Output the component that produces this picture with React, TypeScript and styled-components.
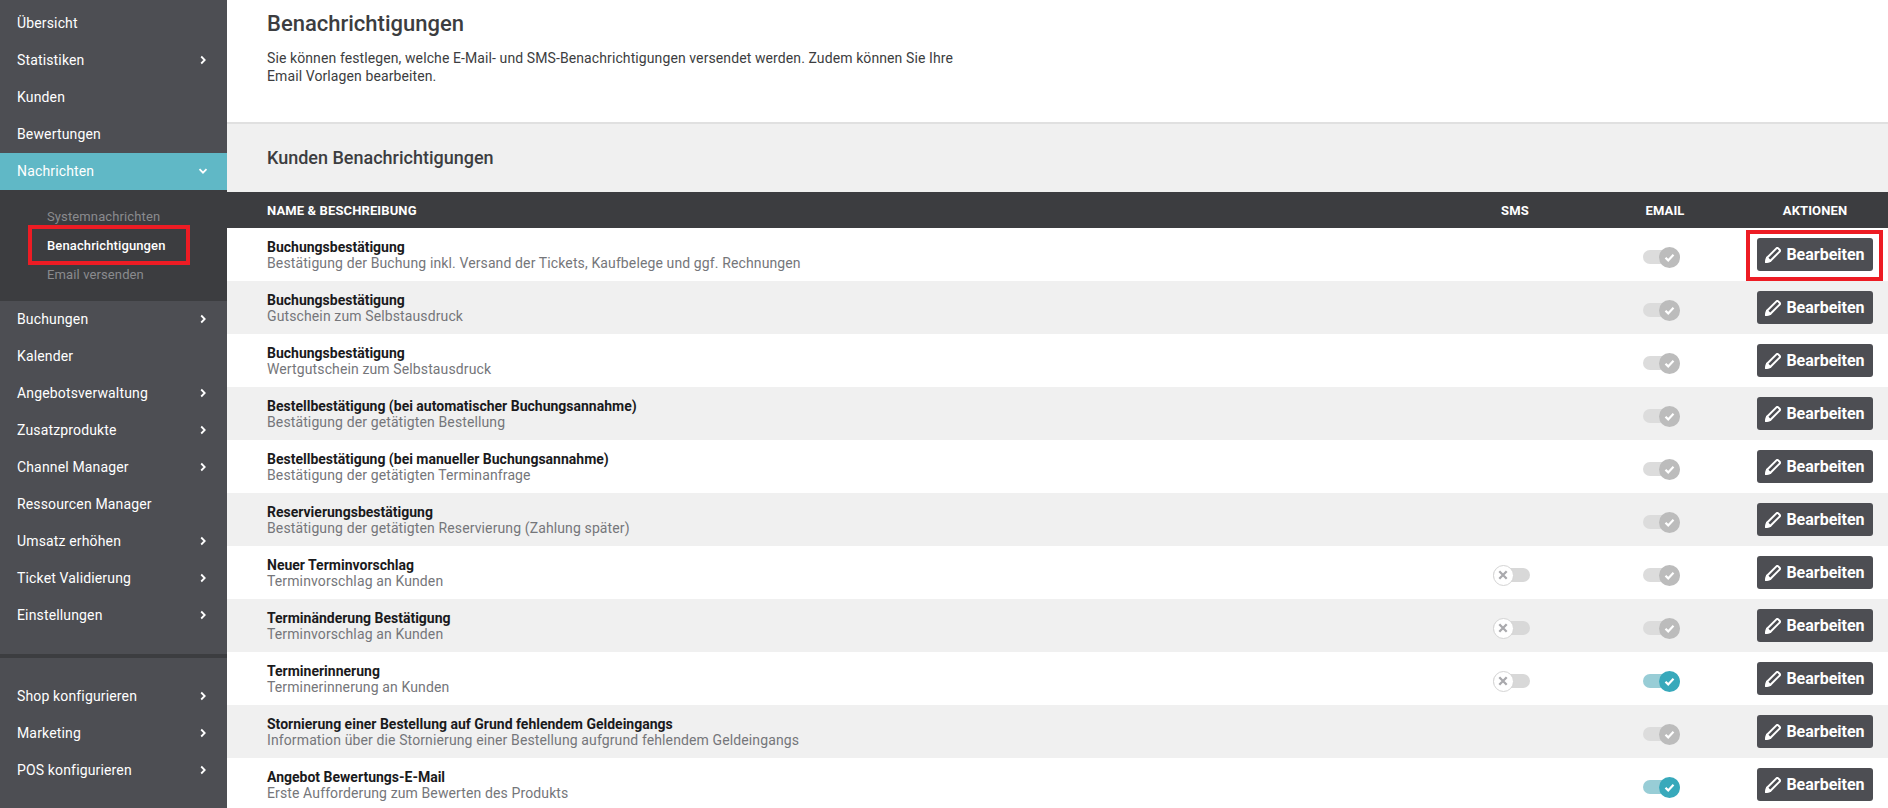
import React from "react";
import styled, { createGlobalStyle } from "styled-components";

const Global = createGlobalStyle`
  html, body { margin: 0; padding: 0; height: 100%; overflow: hidden; background: #fff; }
  #root { height: 100%; }
  * { box-sizing: border-box; }
`;

const Page = styled.div`
  display: flex;
  height: 808px;
  overflow: hidden;
  font-family: Roboto, "Liberation Sans", sans-serif;
`;

const Sidebar = styled.nav`
  position: relative;
  flex: 0 0 227px;
  background: #4d4e53;
  padding-top: 5px;
`;

const NavItem = styled.div<{ $active?: boolean }>`
  display: flex;
  align-items: center;
  justify-content: space-between;
  height: 37px;
  padding: 0 19px 2px 17px;
  font-size: 14px;
  letter-spacing: 0.15px;
  color: #fff;
  background: ${(p) => (p.$active ? "#60b8c6" : "transparent")};
`;

const SubMenu = styled.div`
  height: 111px;
  background: #3c3d40;
  padding: 12px 0 0 47px;
`;

const SubItem = styled.div<{ $active?: boolean }>`
  height: 29px;
  line-height: 29px;
  font-size: 13px;
  letter-spacing: 0.12px;
  font-weight: ${(p) => (p.$active ? 500 : 400)};
  color: ${(p) => (p.$active ? "#fff" : "#8a8b8e")};
`;

const SideDivider = styled.div`
  height: 4px;
  background: #3c3d40;
  margin: 20px 0 20px;
`;

const Highlight = styled.div`
  position: absolute;
  left: 28px;
  top: 225px;
  width: 162px;
  height: 40px;
  border: 4px solid #ed1c24;
`;

const Main = styled.main`
  position: relative;
  flex: 1;
  min-width: 0;
`;

const Intro = styled.header`
  height: 124px;
  padding: 10px 0 0 40px;
  background: #fff;
  border-bottom: 2px solid #e0e0e0;
`;

const Title = styled.h1`
  margin: 0 0 11px;
  font-size: 22px;
  line-height: 28px;
  font-weight: 500;
  color: #3c3d40;
`;

const Lead = styled.p`
  margin: 0;
  width: 720px;
  font-size: 14px;
  line-height: 18px;
  letter-spacing: 0.1px;
  color: #3c3d40;
`;

const SectionHead = styled.div`
  display: flex;
  align-items: center;
  height: 68px;
  padding: 0 0 2px 40px;
  background: #f0f0f0;
  font-size: 18px;
  font-weight: 500;
  color: #3c3d40;
`;

const Grid = `
  display: grid;
  grid-template-columns: 1fr 150px 150px 148px;
  align-items: center;
`;

const HeadRow = styled.div`
  ${Grid}
  height: 36px;
  padding-left: 40px;
  background: #3c3d40;
  color: #fff;
  font-size: 13px;
  letter-spacing: 0.12px;
  font-weight: 700;
`;

const HeadCell = styled.div<{ $center?: boolean }>`
  text-align: ${(p) => (p.$center ? "center" : "left")};
  &:last-child {
    padding-left: 2px;
  }
`;

const Row = styled.div<{ $alt: boolean }>`
  ${Grid}
  height: 53px;
  padding-left: 40px;
  background: ${(p) => (p.$alt ? "#f0f0f0" : "#fff")};
`;

const Name = styled.div`
  font-size: 14px;
  line-height: 16px;
  font-weight: 700;
  color: #1a1a1c;
`;

const Desc = styled.div`
  font-size: 14px;
  line-height: 16px;
  letter-spacing: 0.12px;
  color: #75767a;
`;

const Cell = styled.div`
  display: flex;
  justify-content: center;
  padding: 5px 8px 0 0;
`;

const Track = styled.div<{ $on: boolean; $teal?: boolean }>`
  position: relative;
  width: 37px;
  height: 14px;
  border-radius: 7px;
  background: ${(p) => (p.$teal ? "#98cdd6" : p.$on ? "#dcdcdc" : "#d8d8d8")};
`;

const Knob = styled.div<{ $on: boolean; $teal?: boolean }>`
  position: absolute;
  top: -3.5px;
  ${(p) => (p.$on ? "right: 0;" : "left: 0;")}
  width: 21px;
  height: 21px;
  border-radius: 50%;
  display: flex;
  align-items: center;
  justify-content: center;
  background: ${(p) => (p.$teal ? "#38a9bb" : p.$on ? "#bcbcbc" : "#fff")};
  border: ${(p) => (p.$on ? "none" : "1px solid #d4d4d4")};
`;

const EditButton = styled.button`
  display: flex;
  align-items: center;
  justify-content: center;
  gap: 5px;
  width: 116px;
  height: 33px;
  margin: 0 0 0 17px;
  padding: 0;
  border: none;
  border-radius: 3px;
  background: #4d4e53;
  color: #fff;
  font-family: inherit;
  font-size: 16px;
  font-weight: 700;
`;

const ButtonHighlight = styled.div`
  position: absolute;
  right: 5px;
  top: 230px;
  width: 137px;
  height: 51px;
  border: 4px solid #ed1c24;
`;

const Chevron = ({ open }: { open?: boolean }) => (
  <svg width="10" height="10" viewBox="0 0 10 10" fill="none" stroke="#fff" strokeWidth="1.8">
    <path d={open ? "M1.5 3.2 5 6.7 8.5 3.2" : "M3.2 1.5 6.7 5 3.2 8.5"} />
  </svg>
);

const Pencil = () => (
  <svg width="16" height="16" viewBox="0 0 16 16" fill="none" stroke="#fff" strokeWidth="2" strokeLinejoin="round">
    <path d="M1 15 2 10.8 11.4 1.4a1.3 1.3 0 0 1 1.8 0l1.4 1.4a1.3 1.3 0 0 1 0 1.8L5.2 14Z" />
    <path d="M1 15 2 10.8 5.2 14Z" fill="#fff" />
  </svg>
);

const Toggle = ({ on, teal }: { on: boolean; teal?: boolean }) => (
  <Track $on={on} $teal={teal}>
    <Knob $on={on} $teal={teal}>
      {on ? (
        <svg width="11" height="11" viewBox="0 0 11 11" fill="none" stroke="#fff" strokeWidth="2.2">
          <path d="M1.5 5.8 4.2 8.4 9.5 2.8" />
        </svg>
      ) : (
        <svg width="10" height="10" viewBox="0 0 10 10" fill="none" stroke="#a9a9ad" strokeWidth="2.3">
          <path d="M1.3 1.3 8.7 8.7M8.7 1.3 1.3 8.7" />
        </svg>
      )}
    </Knob>
  </Track>
);

const topNav: [string, boolean][] = [
  ["Übersicht", false],
  ["Statistiken", true],
  ["Kunden", false],
  ["Bewertungen", false],
];
const midNav: [string, boolean][] = [
  ["Buchungen", true],
  ["Kalender", false],
  ["Angebotsverwaltung", true],
  ["Zusatzprodukte", true],
  ["Channel Manager", true],
  ["Ressourcen Manager", false],
  ["Umsatz erhöhen", true],
  ["Ticket Validierung", true],
  ["Einstellungen", true],
];
const bottomNav = ["Shop konfigurieren", "Marketing", "POS konfigurieren"];

const rows: { n: string; d: string; sms?: boolean; teal?: boolean }[] = [
  { n: "Buchungsbestätigung", d: "Bestätigung der Buchung inkl. Versand der Tickets, Kaufbelege und ggf. Rechnungen" },
  { n: "Buchungsbestätigung", d: "Gutschein zum Selbstausdruck" },
  { n: "Buchungsbestätigung", d: "Wertgutschein zum Selbstausdruck" },
  { n: "Bestellbestätigung (bei automatischer Buchungsannahme)", d: "Bestätigung der getätigten Bestellung" },
  { n: "Bestellbestätigung (bei manueller Buchungsannahme)", d: "Bestätigung der getätigten Terminanfrage" },
  { n: "Reservierungsbestätigung", d: "Bestätigung der getätigten Reservierung (Zahlung später)" },
  { n: "Neuer Terminvorschlag", d: "Terminvorschlag an Kunden", sms: true },
  { n: "Terminänderung Bestätigung", d: "Terminvorschlag an Kunden", sms: true },
  { n: "Terminerinnerung", d: "Terminerinnerung an Kunden", sms: true, teal: true },
  { n: "Stornierung einer Bestellung auf Grund fehlendem Geldeingangs", d: "Information über die Stornierung einer Bestellung aufgrund fehlendem Geldeingangs" },
  { n: "Angebot Bewertungs-E-Mail", d: "Erste Aufforderung zum Bewerten des Produkts", teal: true },
];

export default function App() {
  return (
    <Page>
      <Global />
      <Sidebar>
        {topNav.map(([t, c]) => (
          <NavItem key={t}>{t}{c && <Chevron />}</NavItem>
        ))}
        <NavItem $active>Nachrichten<Chevron open /></NavItem>
        <SubMenu>
          <SubItem>Systemnachrichten</SubItem>
          <SubItem $active>Benachrichtigungen</SubItem>
          <SubItem>Email versenden</SubItem>
        </SubMenu>
        {midNav.map(([t, c]) => (
          <NavItem key={t}>{t}{c && <Chevron />}</NavItem>
        ))}
        <SideDivider />
        {bottomNav.map((t) => (
          <NavItem key={t}>{t}<Chevron /></NavItem>
        ))}
        <Highlight />
      </Sidebar>
      <Main>
        <Intro>
          <Title>Benachrichtigungen</Title>
          <Lead>
            Sie können festlegen, welche E-Mail- und SMS-Benachrichtigungen versendet werden. Zudem können Sie Ihre Email Vorlagen bearbeiten.
          </Lead>
        </Intro>
        <SectionHead>Kunden Benachrichtigungen</SectionHead>
        <HeadRow>
          <HeadCell>NAME &amp; BESCHREIBUNG</HeadCell>
          <HeadCell $center>SMS</HeadCell>
          <HeadCell $center>EMAIL</HeadCell>
          <HeadCell $center>AKTIONEN</HeadCell>
        </HeadRow>
        {rows.map((r, i) => (
          <Row key={i} $alt={i % 2 === 1}>
            <div>
              <Name>{r.n}</Name>
              <Desc>{r.d}</Desc>
            </div>
            <Cell>{r.sms && <Toggle on={false} />}</Cell>
            <Cell><Toggle on teal={r.teal} /></Cell>
            <EditButton><Pencil />Bearbeiten</EditButton>
          </Row>
        ))}
        <ButtonHighlight />
      </Main>
    </Page>
  );
}
